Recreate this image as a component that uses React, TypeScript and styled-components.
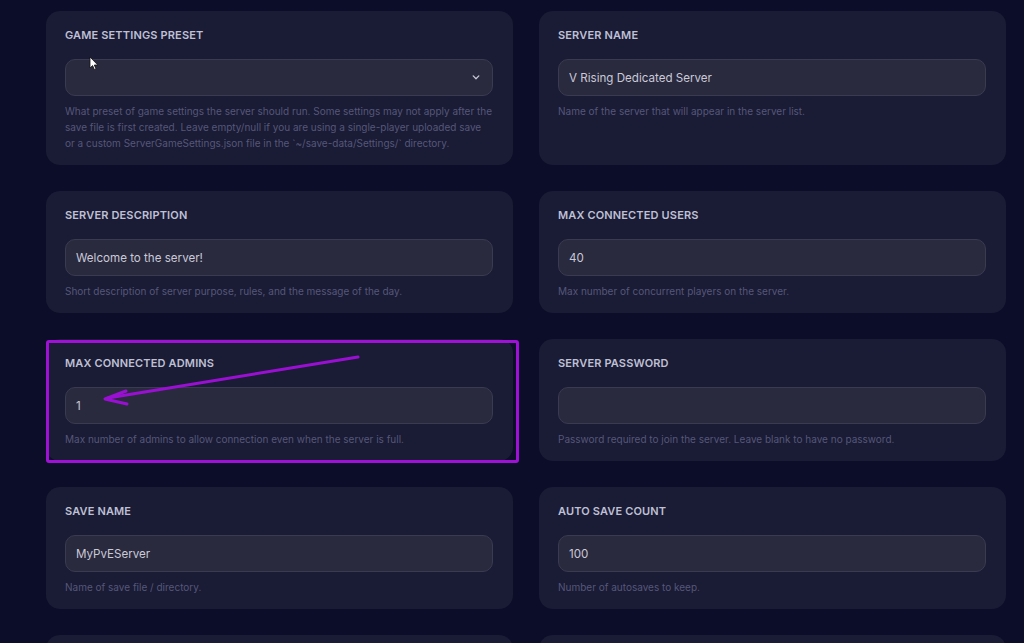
import styled, { createGlobalStyle } from 'styled-components';

interface Field {
  label: string;
  value?: string;
  help: string;
  select?: boolean;
  marked?: boolean;
}

const FIELDS: Field[] = [
  {
    label: 'Game Settings Preset',
    select: true,
    help:
      'What preset of game settings the server should run. Some settings may not apply after the save file is first created. Leave empty/null if you are using a single-player uploaded save or a custom ServerGameSettings.json file in the `~/save-data/Settings/` directory.',
  },
  { label: 'Server Name', value: 'V Rising Dedicated Server', help: 'Name of the server that will appear in the server list.' },
  { label: 'Server Description', value: 'Welcome to the server!', help: 'Short description of server purpose, rules, and the message of the day.' },
  { label: 'Max Connected Users', value: '40', help: 'Max number of concurrent players on the server.' },
  {
    label: 'Max Connected Admins',
    value: '1',
    help: 'Max number of admins to allow connection even when the server is full.',
    marked: true,
  },
  { label: 'Server Password', value: '', help: 'Password required to join the server. Leave blank to have no password.' },
  { label: 'Save Name', value: 'MyPvEServer', help: 'Name of save file / directory.' },
  { label: 'Auto Save Count', value: '100', help: 'Number of autosaves to keep.' },
];

export default function App() {
  return (
    <>
      <GlobalStyle />
      <Page>
        <Grid>
          {FIELDS.map(field => (
            <Card key={field.label}>
              <Label>{field.label}</Label>
              {field.select ? (
                <SelectBox>
                  <Chevron viewBox="0 0 10 6">
                    <polyline points="1.5,1 5,4.5 8.5,1" />
                  </Chevron>
                </SelectBox>
              ) : (
                <Input readOnly value={field.value} />
              )}
              <Help>{field.help}</Help>
              {field.marked && (
                <>
                  <Highlight />
                  <Arrow viewBox="0 0 320 70">
                    <line x1="312" y1="18" x2="62" y2="59" />
                    <polyline points="80,52 59,60 81,65" />
                  </Arrow>
                </>
              )}
            </Card>
          ))}
          {/* next row of cards, scrolled below the fold */}
          <Card $stub />
          <Card $stub />
        </Grid>
        <Cursor viewBox="0 0 10 15">
          <path d="M1 1 L1 12 L3.6 9.6 L5.4 13.6 L7 12.9 L5.3 9 L8.8 9 Z" />
        </Cursor>
      </Page>
    </>
  );
}

const GlobalStyle = createGlobalStyle`
  html, body {
    margin: 0;
    padding: 0;
    background: #0c0d29;
    overflow: hidden;
  }
  * {
    box-sizing: border-box;
  }
`;

const Page = styled.div`
  position: relative;
  height: 643px;
  overflow: hidden;
  padding: 11px 18px 0 46px;
  font-family: Inter, 'Noto Sans', sans-serif;
`;

const Grid = styled.div`
  display: grid;
  grid-template-columns: 1fr 1fr;
  gap: 26px;
`;

const Card = styled.div<{ $stub?: boolean }>`
  position: relative;
  display: flex;
  flex-direction: column;
  min-height: ${p => (p.$stub ? '120px' : 'auto')};
  background: #1a1b34;
  border-radius: 14px;
  padding: 18px 20px 14px 19px;
`;

const Label = styled.div`
  font-size: 11px;
  line-height: 12px;
  font-weight: 600;
  letter-spacing: 0.15px;
  text-transform: uppercase;
  color: #bfc0d4;
`;

const Input = styled.input`
  margin-top: 18px;
  height: 37px;
  width: 100%;
  padding: 0 10px;
  background: #2a2a3e;
  border: 1px solid #3a3a51;
  border-radius: 10px;
  font-family: inherit;
  font-size: 11.6px;
  color: #c9c9d8;
  outline: none;
`;

const SelectBox = styled.div`
  margin-top: 18px;
  height: 37px;
  display: flex;
  align-items: center;
  justify-content: flex-end;
  padding: 0 12px;
  background: #2a2a3e;
  border: 1px solid #3a3a51;
  border-radius: 10px;
`;

const Chevron = styled.svg`
  width: 8px;
  height: 5px;
  fill: none;
  stroke: #c8c8d8;
  stroke-width: 1.6;
  stroke-linecap: round;
  stroke-linejoin: round;
`;

const Help = styled.p`
  margin: 7px 0 0;
  font-size: 10px;
  line-height: 16px;
  color: #55577a;
`;

const Highlight = styled.div`
  position: absolute;
  top: 1px;
  left: 0;
  width: 473px;
  height: 123px;
  border: 3px solid #a011d6;
  border-radius: 3px;
  pointer-events: none;
`;

const Arrow = styled.svg`
  position: absolute;
  top: 0;
  left: 0;
  width: 320px;
  height: 70px;
  fill: none;
  stroke: #9a10d2;
  stroke-width: 3;
  stroke-linecap: round;
  stroke-linejoin: round;
  pointer-events: none;
`;

const Cursor = styled.svg`
  position: absolute;
  top: 56px;
  left: 89px;
  width: 10px;
  height: 15px;
  fill: #ffffff;
  stroke: #111;
  stroke-width: 0.8;
`;
